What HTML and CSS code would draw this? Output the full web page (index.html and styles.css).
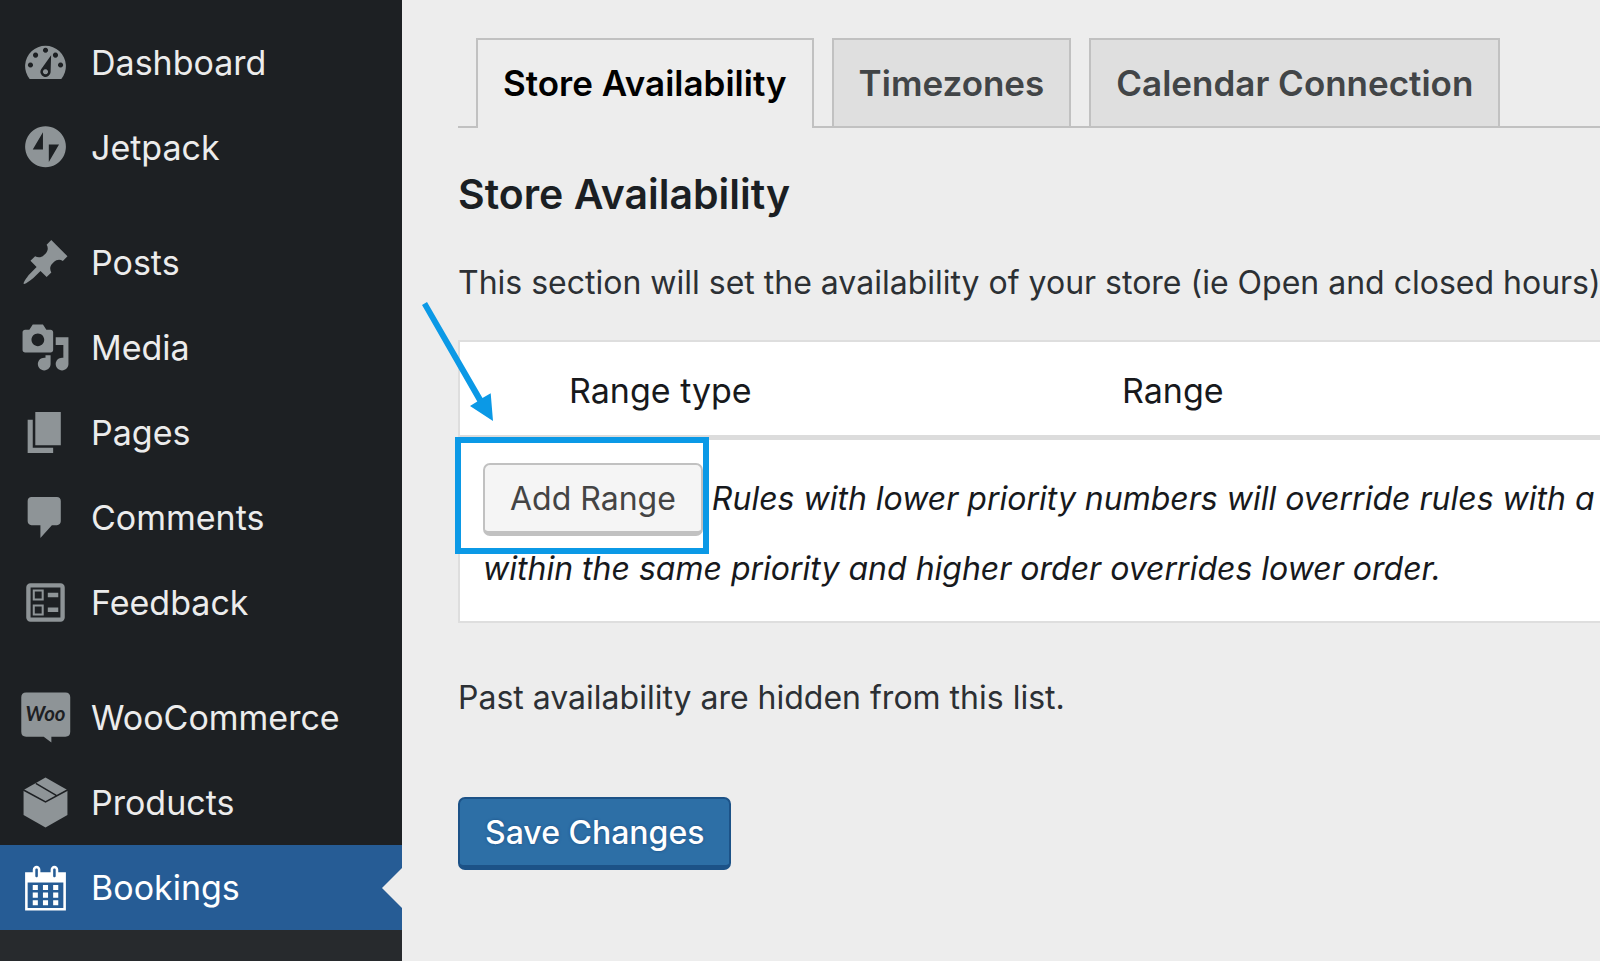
FILE: index.html
```
<!DOCTYPE html>
<html lang="en">
<head>
<meta charset="UTF-8">
<meta name="viewport" content="width=device-width, initial-scale=1.0">
<title>Store Availability</title>
<link rel="stylesheet" href="styles.css">
</head>
<body>

<nav class="sidebar">
  <ul class="menu">
    <li><a href="#">
      <svg class="icon" viewBox="0 0 20 20"><path fill-rule="evenodd" d="M3.800 16.500A8 8 0 1 1 16.200 16.500zM4.100 10a1 1 0 1 0 .01 0zM6.100 6.100a1 1 0 1 0 .01 0zM10 4.200a1 1 0 1 0 .01 0zM13.900 6.100a1 1 0 1 0 .01 0zM15.900 10a1 1 0 1 0 .01 0zM12.200 7.200L8.300 12.600A2 2 0 1 0 12 13.800zM10 12.600a1 1 0 1 1-.01 0z"/></svg>
      Dashboard</a></li>
    <li><a href="#">
      <svg class="icon" viewBox="0 0 20 20"><path fill-rule="evenodd" d="M10 1.700a8 8 0 1 0 .01 0zM9 4v6.800H5zM11.300 8.800h4l-4 6.900z"/></svg>
      Jetpack</a></li>
    <li class="separator"></li>
    <li><a href="#">
      <svg class="icon" viewBox="0 0 20 20"><path d="M10.440 3.020l1.820-1.820 6.360 6.350-1.830 1.820c-1.050-.68-2.480-.57-3.410.36l-.75.75c-.92.93-1.040 2.350-.35 3.410l-1.830 1.820-2.410-2.410-2.800 2.790c-.42.42-3.380 2.710-3.800 2.290s1.860-3.390 2.280-3.810l2.790-2.790L4.100 9.360l1.830-1.820c1.050.69 2.480.57 3.400-.36l.75-.75c.93-.92 1.050-2.350.36-3.410z"/></svg>
      Posts</a></li>
    <li><a href="#">
      <svg class="icon" viewBox="0 0 20 20"><path d="M13 11V4c0-.55-.45-1-1-1h-1.670L9 1H5L3.670 3H2c-.55 0-1 .45-1 1v7c0 .55.45 1 1 1h10c.55 0 1-.45 1-1zM7 4.500c1.380 0 2.500 1.120 2.500 2.500S8.380 9.500 7 9.500 4.500 8.380 4.500 7 5.620 4.500 7 4.500zM14 6h5v10.500c0 1.380-1.120 2.500-2.500 2.500S14 17.880 14 16.500s1.120-2.500 2.500-2.500c.17 0 .34.02.5.05V9h-3V6zm-4 8.050V13h2v3.500c0 1.380-1.120 2.500-2.500 2.500S7 17.880 7 16.500 8.120 14 9.500 14c.17 0 .34.02.5.05z"/></svg>
      Media</a></li>
    <li><a href="#">
      <svg class="icon" viewBox="0 0 20 20"><path d="M6 15V2h10v13H6zm-1 1h8v2H3V5h2v11z"/></svg>
      Pages</a></li>
    <li><a href="#">
      <svg class="icon" viewBox="0 0 20 20"><path d="M4.500 2h10c.83 0 1.500.67 1.500 1.500v8c0 .83-.67 1.500-1.500 1.500H12.500l-4.500 5v-5H4.500c-.83 0-1.500-.67-1.500-1.500v-8C3 2.670 3.670 2 4.500 2z"/></svg>
      Comments</a></li>
    <li><a href="#">
      <svg class="icon" viewBox="0 0 20 20">
        <rect class="line" x="3.300" y="3.300" width="13.400" height="13.400" rx=".8" stroke-width="1.700"/>
        <path class="line" stroke-width=".8" d="M5.400 5.300h3.500v3.500H5.400zM5.400 11.200h3.500v3.500H5.400z"/>
        <path d="M10.900 6.200H15v1.700h-4.100zM10.900 12H15v1.700h-4.100z"/>
      </svg>
      Feedback</a></li>
    <li class="separator"></li>
    <li><a href="#">
      <svg class="icon" viewBox="0 0 20 20">
        <path d="M2.400.2h15.400q1.900 0 1.900 1.900v13.500q0 1.900-1.900 1.900H12.300v2.300l-3-2.300H2.400q-1.900 0-1.900-1.900V2.100Q.5.200 2.400.2z"/>
        <text class="woo" x="10" y="11.500">Woo</text>
      </svg>
      WooCommerce</a></li>
    <li><a href="#">
      <svg class="icon" viewBox="0 0 20 20">
        <path d="M10 .2l8.600 4.900v9.800L10 19.800 1.400 14.900V5.100z"/>
        <path class="seam" d="M1.200 5L10 9.800 18.800 5M6.200 2.500l8 4.700"/>
      </svg>
      Products</a></li>
    <li class="current"><a href="#">
      <svg class="icon" viewBox="0 0 20 20"><path d="M15 4h3v15H2V4h3V3c0-.41.15-.76.44-1.060.29-.29.65-.44 1.060-.44s.77.15 1.060.44c.29.3.44.65.44 1.060v1h4V3c0-.41.15-.76.44-1.060.29-.29.65-.44 1.060-.44s.77.15 1.060.44c.29.3.44.65.44 1.060v1zM6 3v2.500c0 .14.05.26.15.36.09.09.21.14.35.14s.26-.05.35-.14c.1-.1.15-.22.15-.36V3c0-.14-.05-.26-.15-.35-.09-.1-.21-.15-.35-.15s-.26.05-.35.15c-.1.09-.15.21-.15.35zm7 0v2.500c0 .14.05.26.14.36.1.09.22.14.36.14s.26-.05.36-.14c.09-.1.14-.22.14-.36V3c0-.14-.05-.26-.14-.35-.1-.1-.22-.15-.36-.15s-.26.05-.36.15c-.09.09-.14.21-.14.35zm4 15V8H3v10h14zM7 9v2H5V9h2zm2 0h2v2H9V9zm4 2V9h2v2h-2zm-6 1v2H5v-2h2zm2 0h2v2H9v-2zm4 2v-2h2v2h-2zm-6 1v2H5v-2h2zm4 2H9v-2h2v2zm4 0h-2v-2h2v2z"/></svg>
      Bookings</a></li>
  </ul>
  <div class="submenu"></div>
</nav>

<main class="content">
  <div class="tabs">
    <a class="tab tab-active" href="#">Store Availability</a>
    <a class="tab" href="#">Timezones</a>
    <a class="tab" href="#">Calendar Connection</a>
  </div>

  <h1>Store Availability</h1>
  <p class="description">This section will set the availability of your store (ie Open and closed hours)</p>

  <table class="ranges">
    <thead>
      <tr><th class="sort"></th><th class="type">Range type</th><th>Range</th></tr>
    </thead>
    <tbody>
      <tr>
        <td colspan="3">
          <span class="callout">
            <button class="button" type="button">Add Range</button>
            <svg class="arrow" viewBox="0 0 72 120"><path d="M0 3L5 0l55.500 96 8.200-4.700L71 119 48 104l7.300-4.500z"/></svg>
          </span>
          <em>Rules with lower priority numbers will override rules with a<br>within the same priority and higher order overrides lower order.</em>
        </td>
      </tr>
    </tbody>
  </table>

  <p class="note">Past availability are hidden from this list.</p>
  <button class="button button-primary" type="submit">Save Changes</button>
</main>

</body>
</html>
```
FILE: styles.css
```
* { box-sizing: border-box; }
body { margin: 0; min-height: 100vh; display: flex; background: #ededed; color: #2c3034; font-family: Inter, "Liberation Sans", sans-serif; font-size: 32px; overflow: hidden; }

.sidebar { flex: 0 0 402px; display: flex; flex-direction: column; padding-top: 20px; background: #1d2023; }
.menu { list-style: none; margin: 0; padding: 0; }
.menu a { display: flex; align-items: center; gap: 20px; height: 85px; padding-left: 20px; color: #ececec; font-size: 34px; text-decoration: none; }
.separator { height: 30px; }
.icon { width: 51px; height: 51px; fill: #8e9497; }
.icon .line { fill: none; stroke: #8e9497; }
.icon .seam { fill: none; stroke: #1d2023; stroke-width: .6; }
.icon .woo { fill: #1d2023; font-family: Lato, sans-serif; font-size: 8px; font-weight: 700; font-style: italic; text-anchor: middle; }
.current { position: relative; background: #265c95; }
.current a { color: white; }
.current .icon { fill: white; }
.current::after { content: ""; position: absolute; right: 0; top: 23px; border: 20px solid transparent; border-right-color: #ededed; border-left: 0; }
.submenu { flex: 1; background: #272a2d; }

.content { flex: 1; min-width: 0; padding: 38px 0 0 56px; white-space: nowrap; }
.tabs { display: flex; gap: 18px; padding-left: 18px; border-bottom: 2px solid #c1c1c1; }
.tab { padding: 22px 25px; border: 2px solid #c1c1c1; border-bottom: 0; background: #dfdfdf; color: #424547; font-size: 35px; font-weight: 600; line-height: 42px; text-decoration: none; }
.tab-active { margin-bottom: -2px; padding-bottom: 24px; background: #ededed; color: black; }

h1 { margin: 40px 0 0; color: #1b1f23; font-size: 41px; font-weight: 600; line-height: 52px; }
.description { margin: 38px 0 0; line-height: 50px; }

.ranges { width: 100%; margin-top: 32px; border: 2px solid #dedede; border-right: 0; border-collapse: separate; border-spacing: 0; background: white; color: #17191c; }
.ranges th { padding: 26px 0 22px; border-bottom: 5px solid #dcdcdc; font-size: 34px; font-weight: 400; line-height: 45px; text-align: left; }
.ranges .sort { width: 109px; }
.ranges .type { width: 553px; }
.ranges td { padding: 23px 0 20px 23px; line-height: 65px; }

.button { height: 73px; padding: 0 25px; border: 2px solid #c1c1c1; border-bottom-width: 5px; border-radius: 7px; background: #f5f5f5; color: #444; font-family: inherit; font-size: 32px; }
.button-primary { display: block; border-color: #1c5287; background: #2d6fa6; color: white; font-weight: 500; text-shadow: 0 0 3px #1c4f84; }

/* highlight frame and arrow around the button */
.callout { position: relative; display: inline-block; }
.callout::after { content: ""; position: absolute; inset: -26px -6px -18px -28px; border: 6px solid #0b99e6; }
.arrow { position: absolute; left: -61px; top: -161px; width: 72px; height: 120px; fill: #0b99e6; }

.note { margin: 50px 0 0; line-height: 50px; }
.note + .button { margin-top: 74px; }
```
